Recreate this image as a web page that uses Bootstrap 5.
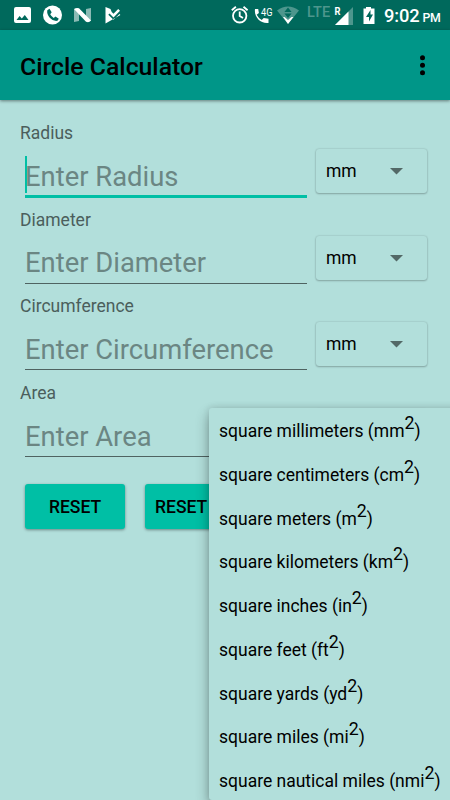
<!DOCTYPE html>
<html lang="en">
<head>
<meta charset="utf-8">
<meta name="viewport" content="width=device-width, initial-scale=1">
<title>Circle Calculator</title>
<link href="https://cdn.jsdelivr.net/npm/bootstrap@5.3.0/dist/css/bootstrap.min.css" rel="stylesheet">
<style>
body{font-family:Roboto,"Noto Sans",sans-serif;background:#b2dfdb;color:#000;width:450px;height:800px;overflow:hidden;line-height:1.2}
.status-bar{height:30px;background:#00695c;color:#fff;padding-left:14px;padding-right:10px}
.status-bar svg{display:block;flex:none}
.lte{font-size:14.5px;font-weight:500;color:#4d968d;line-height:14px;margin:-5px 0 0 6px;width:23px}
.clock{font-size:18.3px;font-weight:500;line-height:22px;margin:3px 0 0 8px;width:56px;letter-spacing:-.15px;white-space:nowrap}
.clock span{font-size:12.3px;margin-left:3px}
.app-bar{height:70px;background:#009688;padding:2px 20px 0 20px;box-shadow:0 1px 3px rgba(0,0,0,.45)}
.app-title{font-size:24.8px;font-weight:500;line-height:30px;padding-top:1px}
.overflow-btn{padding:0 2px 0 0;border:0;background:none}
.form-area{padding:20px 20px 0}
.unit-row{height:86.7px}
.field-label{font-size:17.5px;line-height:26px;color:#4b5e5c;display:block}
.entry{width:282px;margin-left:5px;height:51px;border-bottom:1px solid #4f6361;font-size:27.4px;line-height:34px;padding-top:13.5px;color:#6b8683;white-space:nowrap}
.entry.active{border-bottom:3px solid #00bfa5;height:52px}
.caret{width:2px;height:37px;background:#00bfa5;left:0;top:10px}
.unit-btn{width:111px;height:44px;margin:3px 0 0 9px;padding:1px 24px 0 10px;border-radius:3px;border:0;background:#b2dfdb;font-size:17.5px;color:#000;box-shadow:0 0 2px rgba(0,0,0,.2),0 1px 2px rgba(0,0,0,.22)}
.action-btn{width:100px;height:45px;border:0;border-radius:3px;background:#00bfa5;color:#000;font-size:17.5px;font-weight:500;padding:2px 10px 0;box-shadow:0 1px 3px rgba(0,0,0,.4)}
.action-btn.clear-all{width:160px;text-align:left;white-space:nowrap}
.actions{margin:17px 0 0 5px;gap:20px}
.unit-menu{left:209px;top:408px;width:260px;height:392px;background:#b2dfdb;border-radius:3px;box-shadow:0 7px 14px rgba(0,0,0,.3),0 0 7px rgba(0,0,0,.14);z-index:5}
.unit-item{height:43.75px;padding:0 0 0 10px;font-size:17.5px;line-height:46.5px;white-space:nowrap}
.unit-item sup{font-size:17.8px;line-height:0;top:0;vertical-align:8px}
</style>
<script src="https://cdn.jsdelivr.net/npm/bootstrap@5.3.0/dist/js/bootstrap.bundle.min.js"></script>
</head>
<body class="position-relative">
<div class="status-bar d-flex align-items-center">
  <svg width="107" height="30" viewBox="14 0 107 30">
    <path fill="#fff" fill-rule="evenodd" d="M16 7h13q2 0 2 2v12q0 2-2 2H16q-2 0-2-2V9q0-2 2-2zM16.500 20h12l-3.700-5-3 3.400-2.200-2.400z"/>
    <circle cx="52.500" cy="15" r="9.500" fill="#fff"/>
    <path fill="#00695c" d="M47.300 10.300l2.200-1.500 2.200 3.500-1.500 1.900q1.300 2.400 3.500 3.700l1.800-1.500 3.300 2.300-1.300 2.100c-5.400 1-11.300-5-10.200-10.500z"/>
    <path fill="#8bbab4" d="M74 9l5 2v10l-5 1zM86 9l5-1v13l-5-1z"/><path fill="#fff" d="M74 9q2-1.300 5-.7L91 20.500q-2 2.500-5 1.200z"/>
    <path fill="#fff" d="M105.500 7l5 2 1.200 3 1.800 1.700 4.700-4.700 1.800 1.700-6.500 6.700-4-3.900-1.200 1.200 5.200 5.100 6-5.900.9 1.100L105.500 23.500z"/>
  </svg>
  <svg class="ms-auto" width="70" height="30" viewBox="231 0 70 30">
    <g fill="none" stroke="#fff" stroke-width="1.800"><circle cx="239.700" cy="15.800" r="6.700"/><path d="M239.700 11.500v4.600l3.300 2M231.800 10.300l4.100-3.600M247.600 10.300l-4.100-3.600"/></g>
    <path fill="#fff" d="M255 9h3.200l.7 4-2.200 1.800q1.800 3.500 5 5.200l2-2 4.800.8V23c-8 1-14.700-6-13.500-14z"/>
    <text x="261" y="15.500" font-size="11" fill="#fff" textLength="11.500" lengthAdjust="spacingAndGlyphs">4G</text>
    <path fill="#4d968d" d="M277 10.500q11-8 22 0L288 24z"/>
    <path fill="#00695c" d="M288 7.500l3.600 4.500h-7.200zM284.400 13.500h7.200L288 18z"/>
    <path fill="#fff" d="M283 17h1.500l3.500 3 3.500-3h2L288 24z"/>
  </svg>
  <div class="lte">LTE</div>
  <svg width="46" height="30" viewBox="330 0 46 30">
    <path fill="#4d968d" d="M353 7v18h-18z"/><path fill="#fff" d="M348.500 11.500V25H335z"/>
    <text x="334.500" y="15" font-size="10.500" font-weight="700" fill="#fff" textLength="6" lengthAdjust="spacingAndGlyphs">R</text>
    <path fill="#fff" fill-rule="evenodd" d="M363.500 8.500h2.500V7h5v1.500h3.500V24h-11zM370.500 10l-4.500 7h3v4.500l4-7h-2.500z"/>
  </svg>
  <div class="clock">9:02<span>PM</span></div>
</div>
<nav class="app-bar d-flex align-items-center justify-content-between position-relative">
  <div class="app-title">Circle Calculator</div>
  <button class="overflow-btn" type="button" aria-label="More options"><svg class="d-block" width="11" height="24" viewBox="0 0 11 24"><circle cx="5.500" cy="3.700" r="2.500"/><circle cx="5.500" cy="11.200" r="2.500"/><circle cx="5.500" cy="18.700" r="2.500"/></svg></button>
</nav>
<main class="form-area">
  <div class="unit-row"><span class="field-label">Radius</span>
    <div class="d-flex"><div class="entry active position-relative">Enter Radius<span class="caret position-absolute"></span></div>
    <button class="unit-btn d-flex align-items-center justify-content-between" type="button">mm<svg width="13" height="7"><path d="M0 0h13L6.500 6.500z" fill="#536967"/></svg></button></div></div>
  <div class="unit-row"><span class="field-label">Diameter</span>
    <div class="d-flex"><div class="entry">Enter Diameter</div>
    <button class="unit-btn d-flex align-items-center justify-content-between" type="button">mm<svg width="13" height="7"><path d="M0 0h13L6.500 6.500z" fill="#536967"/></svg></button></div></div>
  <div class="unit-row"><span class="field-label">Circumference</span>
    <div class="d-flex"><div class="entry">Enter Circumference</div>
    <button class="unit-btn d-flex align-items-center justify-content-between" type="button">mm<svg width="13" height="7"><path d="M0 0h13L6.500 6.500z" fill="#536967"/></svg></button></div></div>
  <div class="unit-row"><span class="field-label">Area</span>
    <div class="d-flex"><div class="entry">Enter Area</div>
    <button class="unit-btn" type="button" aria-label="Area unit"></button></div></div>
  <div class="actions d-flex"><button class="action-btn" type="button">RESET</button><button class="action-btn clear-all" type="button">RESET</button></div>
</main>
<div class="unit-menu position-absolute">
  <div class="unit-item">square millimeters (mm<sup>2</sup>)</div>
  <div class="unit-item">square centimeters (cm<sup>2</sup>)</div>
  <div class="unit-item">square meters (m<sup>2</sup>)</div>
  <div class="unit-item">square kilometers (km<sup>2</sup>)</div>
  <div class="unit-item">square inches (in<sup>2</sup>)</div>
  <div class="unit-item">square feet (ft<sup>2</sup>)</div>
  <div class="unit-item">square yards (yd<sup>2</sup>)</div>
  <div class="unit-item">square miles (mi<sup>2</sup>)</div>
  <div class="unit-item">square nautical miles (nmi<sup>2</sup>)</div>
</div>
</body>
</html>
